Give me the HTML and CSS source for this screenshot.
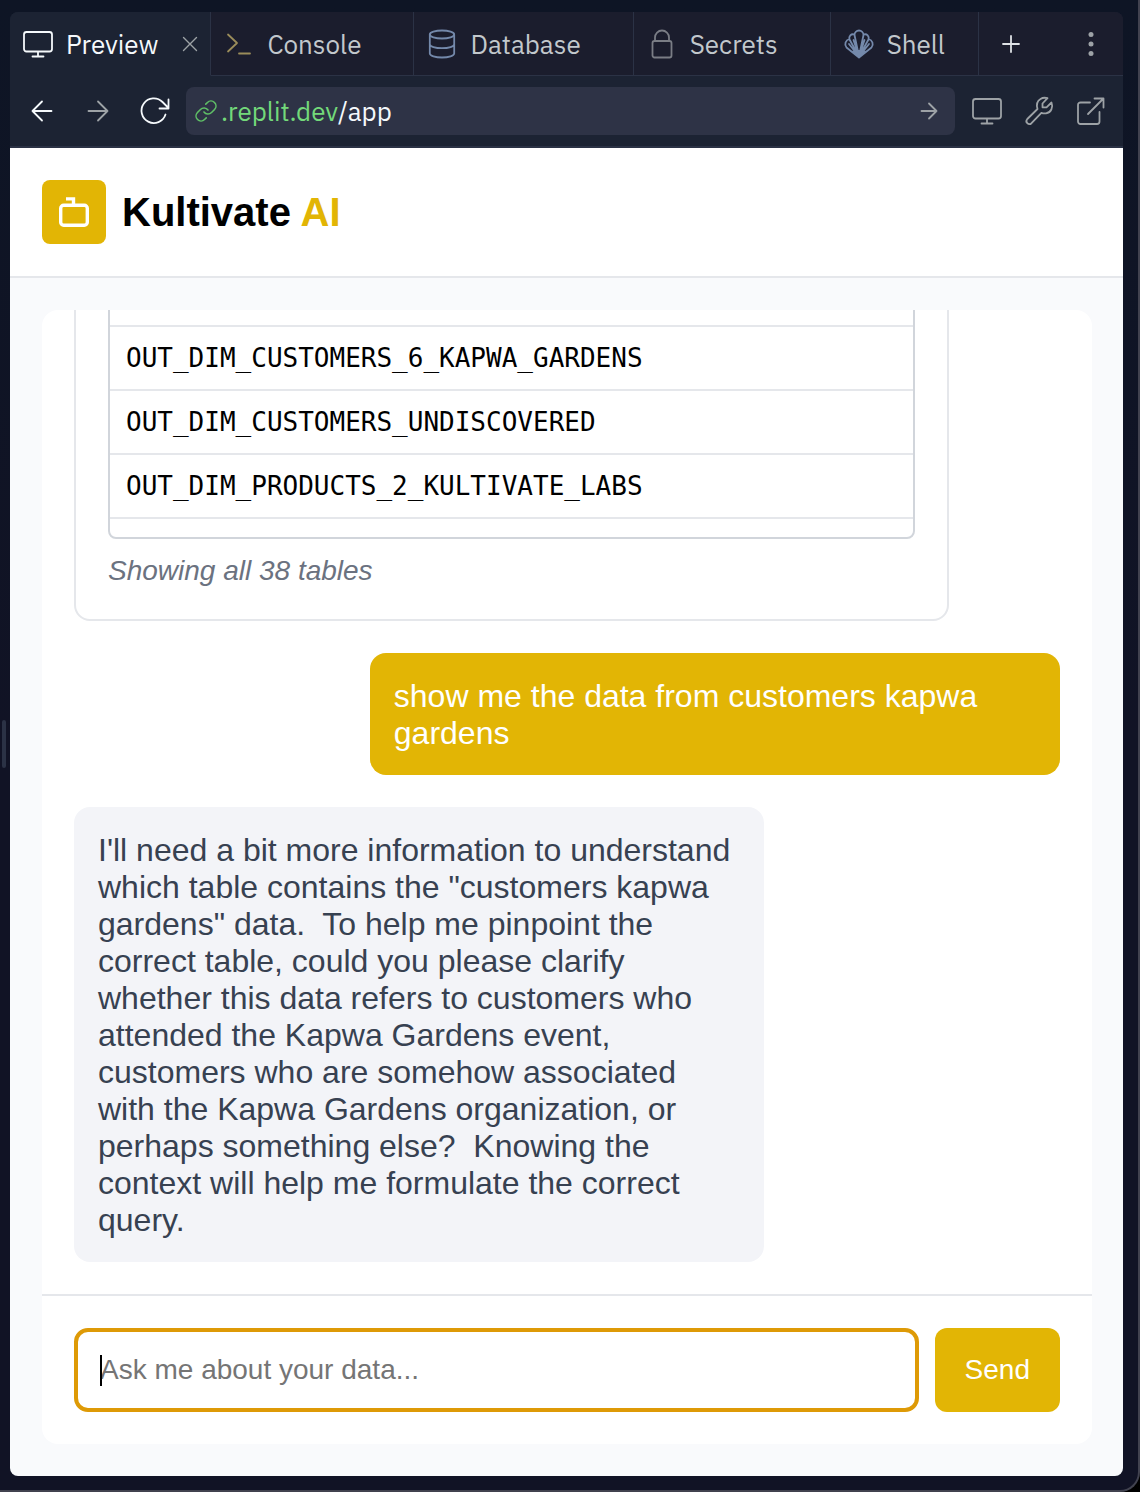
FILE: index.html
```html
<!DOCTYPE html>
<html lang="en">
<head>
<meta charset="utf-8">
<meta name="viewport" content="width=device-width, initial-scale=1">
<title>Kultivate AI</title>
<link rel="stylesheet" href="styles.css">
</head>
<body>
<div class="window">
  <div class="resize-handle"></div>
  <div class="pane">
    <nav class="tabs" aria-label="Tools">
      <div class="tab tab-active">
        <button class="tab-button" type="button">
          <svg class="icon" viewBox="0 0 28 28"><rect x="0" y="2" width="28" height="19.500" rx="2.500"/><path d="M14 22v4M8.500 26.500h11"/></svg>
          Preview
        </button>
        <button class="icon-button tab-close" type="button" aria-label="Close Preview">
          <svg class="icon-small thin" viewBox="0 0 16 16"><path d="M1.500 1.500l13 13M14.500 1.500l-13 13"/></svg>
        </button>
      </div>
      <div class="tab">
        <button class="tab-button" type="button">
          <svg class="icon olive" viewBox="0 0 28 28"><path d="M3 4.500l9 8.500-9 8.500M14 23.500h11"/></svg>
          Console
        </button>
      </div>
      <div class="tab">
        <button class="tab-button" type="button">
          <svg class="icon blue" viewBox="0 0 28 28"><ellipse cx="14" cy="4.500" rx="12.200" ry="4"/><path d="M1.800 4.500v19c0 2.200 5.500 4 12.200 4s12.200-1.800 12.200-4v-19M1.800 14.200c0 2.200 5.500 4 12.200 4s12.200-1.800 12.200-4"/></svg>
          Database
        </button>
      </div>
      <div class="tab">
        <button class="tab-button" type="button">
          <svg class="icon gray" viewBox="0 0 28 28"><rect x="4.500" y="11" width="19" height="16.500" rx="2"/><path d="M7 11V7.500a7 7 0 0 1 14 0V11"/></svg>
          Secrets
        </button>
      </div>
      <div class="tab tab-last">
        <button class="tab-button" type="button">
          <svg class="icon blue" viewBox="0 0 28 28"><path d="M14 26.500L9.500 5a4.500 4.500 0 0 1 9 0L14 26.500M14 26.500L4.500 9.500C3.500 6 6 3.500 9.500 4.500M14 26.500L23.500 9.500C24.500 6 22 3.500 18.500 4.500M4.500 9C.5 10-1 14.500 1.500 17.500L14 27.500l12.500-10c2.500-3 1-7.500-3-8.500M14 26.500L8.500 10M14 26.500L19.500 10M14 26.500L4 14M14 26.500L24 14"/><path class="solid" d="M6.500 21l4.500-1h6l4.500 1-7.500 6.500z"/></svg>
          Shell
        </button>
      </div>
      <button class="icon-button tab-add" type="button" aria-label="New tab">
        <svg class="icon-small" viewBox="0 0 16 16"><path d="M8 0v16M0 8h16"/></svg>
      </button>
      <button class="icon-button tab-menu" type="button" aria-label="More">
        <svg class="icon filled" viewBox="0 0 28 28"><circle cx="14" cy="4.500" r="2.500"/><circle cx="14" cy="14" r="2.500"/><circle cx="14" cy="23.500" r="2.500"/></svg>
      </button>
    </nav>

    <div class="toolbar">
      <button class="icon-button bright" type="button" aria-label="Back">
        <svg class="icon" viewBox="0 0 28 28"><path d="M23.500 14H4.500M14 4.500L4.500 14l9.500 9.500"/></svg>
      </button>
      <button class="icon-button" type="button" aria-label="Forward">
        <svg class="icon" viewBox="0 0 28 28"><path d="M4.500 14h19M14 4.500l9.500 9.500-9.500 9.500"/></svg>
      </button>
      <button class="icon-button bright" type="button" aria-label="Reload">
        <svg class="icon" viewBox="0 0 28 28"><path d="M25.500 17.500A12.300 12.300 0 1 1 22.500 5L28 10.500M28.500 2.500v9h-9"/></svg>
      </button>
      <div class="address">
        <a class="address-link" href="/app">
          <svg class="icon-link" viewBox="0 0 24 24"><path d="M10 13a5 5 0 0 0 7.540.540l3-3a5 5 0 0 0-7.070-7.070l-1.720 1.710"/><path d="M14 11a5 5 0 0 0-7.540-.540l-3 3a5 5 0 0 0 7.070 7.070l1.710-1.710"/></svg>
          <span class="host">.replit.dev</span><span class="path">/app</span>
        </a>
        <button class="icon-button" type="button" aria-label="Go">
          <svg class="icon-small" viewBox="0 0 16 16"><path d="M.5 8h15M8 .5L15.500 8 8 15.500"/></svg>
        </button>
      </div>
      <div class="tools">
        <button class="icon-button" type="button" aria-label="Device size">
          <svg class="icon" viewBox="0 0 28 28"><rect x="0" y="2" width="28" height="19.500" rx="2.500"/><path d="M14 22v4M8.500 26.500h11"/></svg>
        </button>
        <button class="icon-button" type="button" aria-label="Developer tools">
          <svg class="icon" viewBox="0 0 28 28"><path d="M22.500 1.200L17.500 6.500v3.800h4L26.500 5.500C28.500 10.500 26 15.500 21 16.300c-1.800.3-3.300 0-4.600-.5L6.500 26.200c-3 2.600-6.800-1.200-4.200-4.200L12.500 12C11.300 8 12.200 4 15.500 2c2-1.300 4.700-1.500 7-.8z"/></svg>
        </button>
        <button class="icon-button" type="button" aria-label="Open in new tab">
          <svg class="icon" viewBox="0 0 28 28"><path d="M13 5.500H3.500A2.500 2.500 0 0 0 1 8v16.500A2.500 2.500 0 0 0 3.500 27H20a2.500 2.500 0 0 0 2.500-2.500V15M17.500 1.500h9v9M26.500 1.500L11 17"/></svg>
        </button>
      </div>
    </div>

    <div class="app">
      <header class="app-header">
        <span class="logo">
          <svg class="logo-icon" viewBox="0 0 32 32"><rect x="2.700" y="9.200" width="26.600" height="20" rx="3"/><path d="M8 2.900h7.500v6"/></svg>
        </span>
        <h1 class="brand">Kultivate <span class="brand-accent">AI</span></h1>
      </header>

      <main class="main">
        <section class="chat">
          <div class="messages">
            <div class="result">
              <div class="table-scroll">
                <table class="table-list">
                  <tbody>
                    <tr><td></td></tr>
                    <tr><td>OUT_DIM_CUSTOMERS_6_KAPWA_GARDENS</td></tr>
                    <tr><td>OUT_DIM_CUSTOMERS_UNDISCOVERED</td></tr>
                    <tr><td>OUT_DIM_PRODUCTS_2_KULTIVATE_LABS</td></tr>
                    <tr><td></td></tr>
                  </tbody>
                </table>
              </div>
              <p class="result-note">Showing all 38 tables</p>
            </div>
            <p class="bubble bubble-user">show me the data from customers kapwa gardens</p>
            <p class="bubble bubble-bot">I'll need a bit more information to understand which table contains the "customers kapwa gardens" data.  To help me pinpoint the correct table, could you please clarify whether this data refers to customers who attended the Kapwa Gardens event, customers who are somehow associated with the Kapwa Gardens organization, or perhaps something else?  Knowing the context will help me formulate the correct query.</p>
          </div>
          <form class="composer">
            <div class="field">
              <input class="field-input" type="text" aria-label="Message" placeholder="Ask me about your data...">
              <span class="caret"></span>
            </div>
            <button class="send" type="button">Send</button>
          </form>
        </section>
      </main>
    </div>
  </div>
</div>
</body>
</html>
```
FILE: styles.css
```css
* {
  box-sizing: border-box;
}

body {
  margin: 0;
  background: #000;
  font-family: "Liberation Sans", Arial, sans-serif;
}

button {
  margin: 0;
  padding: 0;
  border: 0;
  background: none;
  color: inherit;
  font: inherit;
}

.window {
  position: relative;
  display: flex;
  height: 100vh;
  padding: 12px 15px 14px 10px;
  border-right: 2px solid #41424f;
  border-bottom: 2px solid #41424f;
  border-bottom-right-radius: 20px;
  background: linear-gradient(#0e1525, #111325 50%);
}

.resize-handle {
  position: absolute;
  left: 2px;
  top: 720px;
  width: 4px;
  height: 48px;
  border-radius: 2px;
  background: #2b3245;
}

.pane {
  flex: 1;
  display: flex;
  flex-direction: column;
  min-width: 0;
  overflow: hidden;
  border-radius: 8px;
  background: #1c2333;
  font-family: "IBM Plex Sans", Roboto, sans-serif;
  font-size: 26px;
  color: #c2c8cc;
}

/* Icons */
svg {
  display: block;
  flex: none;
  overflow: visible;
  fill: none;
  stroke: currentColor;
  stroke-width: 2;
  stroke-linecap: round;
  stroke-linejoin: round;
}

.icon { width: 28px; height: 28px; stroke-width: 1.8; }
.icon-small { width: 16px; height: 16px; stroke-width: 1.8; }
.icon-link { width: 24px; height: 24px; stroke-width: 1.6; }
.thin { stroke-width: 1.4; }
.olive { color: #9a8c5a; }
.blue { color: #7489ab; }
.gray { color: #7a7d85; }
.filled { fill: currentColor; stroke: none; }
.solid { fill: currentColor; stroke: none; }

.icon-button {
  display: flex;
  align-items: center;
  justify-content: center;
  color: #9da2a6;
}

.bright { color: #f5f9fc; }

/* Tab strip */
.tabs {
  display: flex;
  flex: none;
  height: 64px;
}

.tab {
  display: flex;
  align-items: center;
  justify-content: space-between;
  flex: 0 1 auto;
  padding: 0 52px 0 14px;
  border-right: 1px solid #2b3245;
  border-bottom: 1px solid #2b3245;
  background: #1b1d2d;
}

.tab-active {
  gap: 24px;
  padding-right: 12px;
  border-bottom-color: transparent;
  background: #1c2333;
  color: #f5f9fc;
}

.tab-last { padding-right: 33px; }

.tab-button {
  display: flex;
  align-items: center;
  gap: 14px;
}

.tab-add,
.tab-menu {
  width: 64px;
  border-bottom: 1px solid #2b3245;
  background: #1b1d2d;
}

.tab-add { color: #dfe2e6; }

.tab-menu {
  flex: 1;
  justify-content: flex-end;
  padding-right: 18px;
}

/* Address toolbar */
.toolbar {
  display: flex;
  flex: none;
  align-items: center;
  gap: 28px;
  height: 72px;
  padding: 0 18px;
  border-bottom: 2px solid #2b3245;
}

.address {
  display: flex;
  flex: 1;
  align-items: center;
  justify-content: space-between;
  height: 48px;
  margin-left: -10px;
  margin-right: -10px;
  padding: 0 18px 0 8px;
  border-radius: 8px;
  background: #2e3346;
}

.address-link {
  display: flex;
  align-items: center;
  color: #f5f9fc;
  text-decoration: none;
}

.host {
  margin-left: 3px;
  color: #73d97a;
}

.icon-link { color: #5fbf66; }

.tools {
  display: flex;
  gap: 24px;
}

/* Application */
.app {
  display: flex;
  flex: 1;
  flex-direction: column;
  min-height: 0;
  background: #f9fafc;
  font-family: "Liberation Sans", Arial, sans-serif;
  color: #000;
}

.app-header {
  display: flex;
  flex: none;
  align-items: center;
  gap: 16px;
  padding: 32px;
  border-bottom: 2px solid #e5e7eb;
  background: #fff;
}

.logo {
  display: flex;
  align-items: center;
  justify-content: center;
  width: 64px;
  height: 64px;
  border-radius: 8px;
  background: #e2b505;
  color: #fff;
}

.logo-icon {
  width: 32px;
  height: 32px;
  stroke-width: 3.4;
  stroke-linejoin: miter;
  stroke-linecap: butt;
}

.brand {
  margin: 0;
  font-size: 40px;
  line-height: 56px;
}

.brand-accent { color: #e2b505; }

.main {
  display: flex;
  flex: 1;
  min-height: 0;
  padding: 32px 31px 32px 32px;
}

.chat {
  display: flex;
  flex: 1;
  flex-direction: column;
  min-width: 0;
  overflow: hidden;
  border-radius: 16px;
  background: #fff;
}

.messages {
  display: flex;
  flex: 1;
  flex-direction: column;
  justify-content: flex-end;
  gap: 32px;
  min-height: 0;
  overflow: hidden;
  padding: 32px;
}

.result {
  flex: none;
  width: 100%;
  max-width: 875px;
  padding: 32px;
  border: 2px solid #e5e7eb;
  border-radius: 16px;
}

.table-scroll {
  height: 278px;
  overflow: hidden;
  border: 2px solid #d1d5db;
  border-radius: 8px;
}

.table-list {
  width: 100%;
  border-spacing: 0;
  font-family: "DejaVu Sans Mono", monospace;
  font-size: 26px;
  line-height: 30px;
}

.table-list td {
  height: 64px;
  padding: 16px;
  border-bottom: 2px solid #e5e7eb;
}

.result-note {
  margin: 16px 0 0;
  color: #6b7280;
  font-size: 28px;
  font-style: italic;
  line-height: 32px;
}

.bubble {
  flex: none;
  max-width: 70%;
  margin: 0;
  padding: 25px 24px 23px;
  border-radius: 16px;
  font-size: 32px;
  line-height: 37px;
  white-space: pre-wrap;
}

.bubble-user {
  align-self: flex-end;
  background: #e2b505;
  color: #fff;
}

.bubble-bot {
  align-self: flex-start;
  background: #f3f4f8;
  color: #374151;
}

.composer {
  display: flex;
  flex: none;
  gap: 16px;
  padding: 32px;
  border-top: 2px solid #e5e7eb;
}

.field {
  position: relative;
  flex: 1;
}

.field-input {
  display: block;
  width: 100%;
  height: 84px;
  padding: 0 22px;
  border: 4px solid #de9a06;
  border-radius: 14px;
  outline: 0;
  background: #fff;
  font-family: inherit;
  font-size: 28px;
}

.field-input::placeholder { color: #757575; }

.caret {
  position: absolute;
  left: 26px;
  top: 27px;
  width: 2px;
  height: 31px;
  background: #000;
}

.send {
  padding: 0 30px;
  border-radius: 12px;
  background: #e2b505;
  color: #fff;
  font-size: 28px;
}
```
